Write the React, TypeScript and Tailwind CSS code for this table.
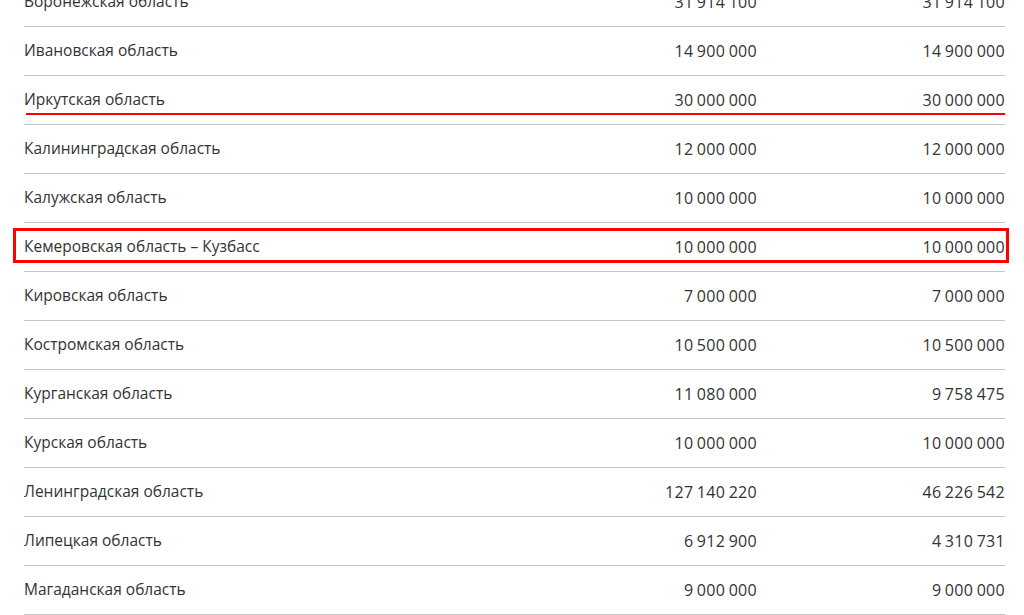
import React from 'react';

interface Row {
  name: string;
  plan: string;
  fact: string;
  mark?: 'underline' | 'box';
}

const rows: Row[] = [
  { name: 'Воронежская область', plan: '31 914 100', fact: '31 914 100' },
  { name: 'Ивановская область', plan: '14 900 000', fact: '14 900 000' },
  { name: 'Иркутская область', plan: '30 000 000', fact: '30 000 000', mark: 'underline' },
  { name: 'Калининградская область', plan: '12 000 000', fact: '12 000 000' },
  { name: 'Калужская область', plan: '10 000 000', fact: '10 000 000' },
  { name: 'Кемеровская область – Кузбасс', plan: '10 000 000', fact: '10 000 000', mark: 'box' },
  { name: 'Кировская область', plan: '7 000 000', fact: '7 000 000' },
  { name: 'Костромская область', plan: '10 500 000', fact: '10 500 000' },
  { name: 'Курганская область', plan: '11 080 000', fact: '9 758 475' },
  { name: 'Курская область', plan: '10 000 000', fact: '10 000 000' },
  { name: 'Ленинградская область', plan: '127 140 220', fact: '46 226 542' },
  { name: 'Липецкая область', plan: '6 912 900', fact: '4 310 731' },
  { name: 'Магаданская область', plan: '9 000 000', fact: '9 000 000' },
];

function TableRow({ row }: { row: Row }) {
  return (
    <div className="relative grid grid-cols-[1fr_248px_248px] items-center h-[49px] border-b border-[#c4c4c4]">
      <span className="text-[15.5px]">{row.name}</span>
      <span className="text-right text-[16px] tracking-[0.3px] [word-spacing:-1px]">{row.plan}</span>
      <span className="text-right text-[16px] tracking-[0.3px] [word-spacing:-1px]">{row.fact}</span>
      {row.mark === 'underline' && (
        <div className="absolute left-[2px] right-0 top-[37px] h-[2px] bg-[#ff0000]" />
      )}
      {row.mark === 'box' && (
        <div className="absolute left-[-11px] right-[-4px] top-[5px] h-[35px] border-[3px] border-[#ff0000]" />
      )}
    </div>
  );
}

export default function App() {
  return (
    <div className="w-[1024px] h-[615px] overflow-hidden bg-white">
      <div
        className="ml-[24px] w-[981px] -mt-[22px] text-[#333333]"
        style={{ fontFamily: '"Open Sans", "Noto Sans", sans-serif' }}
      >
        {rows.map((row) => (
          <TableRow key={row.name} row={row} />
        ))}
      </div>
    </div>
  );
}
